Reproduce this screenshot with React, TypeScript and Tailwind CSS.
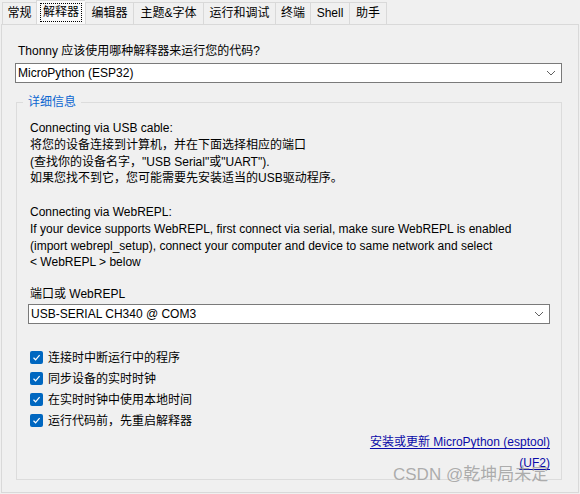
import React from "react";

const FONT = '"Liberation Sans", "Noto Sans CJK SC", sans-serif';

const tabs: { label: string; w: number; selected?: boolean }[] = [
  { label: "常规", w: 34 },
  { label: "解释器", w: 49, selected: true },
  { label: "编辑器", w: 48 },
  { label: "主题&字体", w: 70 },
  { label: "运行和调试", w: 72 },
  { label: "终端", w: 35 },
  { label: "Shell", w: 39 },
  { label: "助手", w: 38 },
];

function Chevron() {
  return (
    <svg width="10" height="6" viewBox="0 0 10 6" className="shrink-0">
      <path d="M1 1 L5 5 L9 1" fill="none" stroke="#606060" strokeWidth="1" />
    </svg>
  );
}

function Combo({ value, className }: { value: string; className?: string }) {
  return (
    <div
      className={
        "flex h-[20px] items-center justify-between border border-[#7a7a7a] bg-white pl-[2px] pr-[5px] " +
        (className ?? "")
      }
    >
      <span className="leading-[18px]">{value}</span>
      <Chevron />
    </div>
  );
}

function Check({ label }: { label: string }) {
  return (
    <div className="flex h-[21px] items-center gap-[5px]">
      <div className="flex h-[13px] w-[13px] items-center justify-center rounded-[2px] bg-[#0067c0]">
        <svg width="9" height="9" viewBox="0 0 9 9">
          <path d="M1.5 4.8 L3.6 6.8 L7.6 2.2" fill="none" stroke="white" strokeWidth="1.2" />
        </svg>
      </div>
      <span>{label}</span>
    </div>
  );
}

export default function App() {
  return (
    <div
      className="relative h-[494px] w-[580px] overflow-hidden bg-[#f0f0f0] text-[12px] text-black"
      style={{ fontFamily: FONT }}
    >
      {/* Tabs */}
      <div className="flex h-[24px] items-end pl-[2px]">
        {tabs.map((t, i) => (
          <div
            key={t.label}
            style={{ width: t.w }}
            className={
              "flex items-center justify-center border-l border-t border-[#d9d9d9] " +
              (i === tabs.length - 1 ? "border-r " : "") +
              (t.selected ? "h-[24px] bg-[#f9f9f9]" : "h-[22px] bg-[#f0f0f0]")
            }
          >
            {t.selected ? (
              <span className="border border-dotted border-black px-[2px] leading-[17px]">{t.label}</span>
            ) : (
              <span className="leading-[17px]">{t.label}</span>
            )}
          </div>
        ))}
      </div>

      {/* Panel */}
      <div className="mx-[1px] flex h-[469px] flex-col border border-[#d9d9d9] pl-[13px] pr-[16px] pt-[18px]">
        <div className="ml-[3px] leading-[17px]">Thonny 应该使用哪种解释器来运行您的代码?</div>
        <Combo value="MicroPython (ESP32)" className="mt-[3px]" />

        {/* Group box */}
        <div className="relative ml-[1px] mt-[19px] flex h-[378px] flex-col border border-[#dcdcdc] pl-[13px] pr-[11px] pt-[17px]">
          <div className="absolute left-[6px] top-[-9px] bg-[#f0f0f0] px-[5px] leading-[17px] text-[#0b66d0]">
            详细信息
          </div>
          <div className="leading-[16.8px]">
            <div>Connecting via USB cable:</div>
            <div>将您的设备连接到计算机，并在下面选择相应的端口</div>
            <div>(查找你的设备名字，"USB Serial"或"UART").</div>
            <div>如果您找不到它，您可能需要先安装适当的USB驱动程序。</div>
            <div>&nbsp;</div>
            <div>Connecting via WebREPL:</div>
            <div>If your device supports WebREPL, first connect via serial, make sure WebREPL is enabled</div>
            <div>(import webrepl_setup), connect your computer and device to same network and select</div>
            <div>&lt; WebREPL &gt; below</div>
          </div>
          <div className="mt-[15px] leading-[17px]">端口或 WebREPL</div>
          <Combo value="USB-SERIAL CH340 @ COM3" className="-ml-[2px] mt-[1px]" />

          <div className="mt-[23px] flex flex-col">
            <Check label="连接时中断运行中的程序" />
            <Check label="同步设备的实时时钟" />
            <Check label="在实时时钟中使用本地时间" />
            <Check label="运行代码前，先重启解释器" />
          </div>

          <div className="mt-[1px] flex flex-col items-end text-[#0a0aa8]">
            <span className="leading-[21px] underline underline-offset-2">安装或更新 MicroPython (esptool)</span>
            <span className="leading-[21px] underline underline-offset-2">(UF2)</span>
          </div>
        </div>
      </div>

      {/* Watermark */}
      <div
        className="pointer-events-none absolute left-[393px] top-[465px] text-[17px] leading-[20px] text-[#9a9a9a]/80"
        style={{ fontFamily: '"Liberation Sans", "Noto Sans CJK SC", sans-serif' }}
      >
        CSDN @乾坤局未定
      </div>
    </div>
  );
}
